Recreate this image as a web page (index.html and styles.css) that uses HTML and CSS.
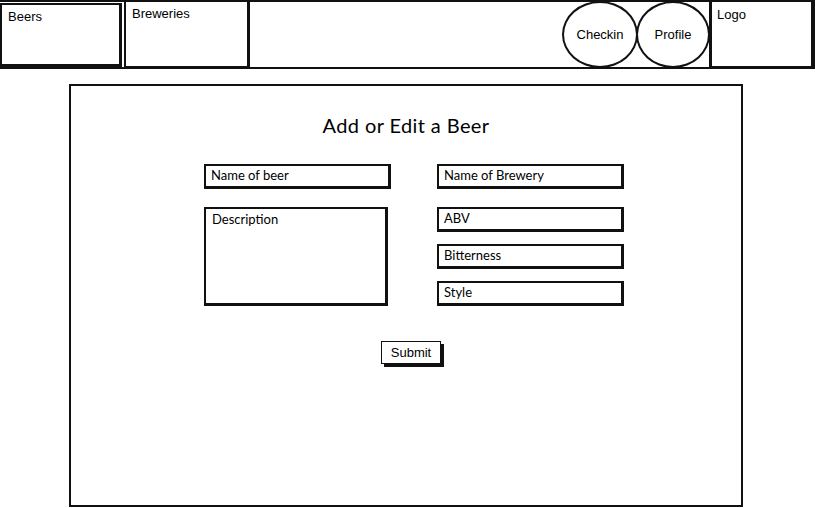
FILE: index.html
```html
<!DOCTYPE html>
<html lang="en">
<head>
    <meta charset="UTF-8">
    <title>Add or Edit a Beer</title>
    <meta name="viewport" content="width=device-width, initial-scale=1.0">
    <link rel="stylesheet" href="styles.css">
</head>
<body>

<div class="topbar">
    <div class="tab tab-beers">Beers</div>
    <div class="tab tab-breweries">Breweries</div>
    <div class="spacer"></div>
    <div class="circle">Checkin</div>
    <div class="circle">Profile</div>
    <div class="tab tab-logo">Logo</div>
</div>

<div class="panel">
    <h2>Add or Edit a Beer</h2>
    <form class="beer-form">
        <div class="col">
            <div class="field">Name of beer</div>
            <div class="field field-area">Description</div>
        </div>
        <div class="col">
            <div class="field">Name of Brewery</div>
            <div class="field field-small">ABV</div>
            <div class="field field-small">Bitterness</div>
            <div class="field field-small">Style</div>
        </div>
    </form>
    <div class="submit-row">
        <button type="button" class="submit">Submit</button>
    </div>
</div>

</body>
</html>
```

FILE: styles.css
```css
* {
    box-sizing: border-box;
}

body {
    margin: 0;
    background: #fff;
    color: #000;
    font-family: 'Liberation Sans', Arial, sans-serif;
    width: 815px;
    height: 508px;
    overflow: hidden;
}

/* top navigation */
.topbar {
    display: flex;
    align-items: stretch;
    height: 69px;
    border-top: 2px solid #111;
    border-bottom: 2px solid #111;
    border-right: 2px solid #111;
}

.tab {
    border: 2px solid #111;
    font-size: 13px;
    padding: 5px 6px;
}

.tab-beers {
    width: 122px;
    margin: 1px 0 0 0;
    padding-top: 4px;
    border-width: 2px 3px 3px 2px;
}

.tab-breweries {
    width: 126px;
    margin: -2px 0 -1px 2px;
    padding-top: 4px;
    border-width: 2px 3px 2px 2px;
}

.tab-logo {
    width: 104px;
    margin: -2px 0 -1px 0;
    padding-top: 5px;
    padding-left: 5px;
    border-width: 2px 2px 2px 3px;
}

.spacer {
    flex: 1;
}

.circle {
    width: 76px;
    margin: -1px -2px -1px 0;
    border: 2px solid #111;
    border-radius: 50%;
    display: flex;
    align-items: center;
    justify-content: center;
    font-size: 13px;
}

.circle + .circle {
    margin-right: -1px;
    width: 74px;
}

/* main panel */
.panel {
    width: 674px;
    height: 423px;
    margin: 15px 0 0 69px;
    border: 2px solid #111;
    font-family: Lato, 'Open Sans', sans-serif;
}

.panel h2 {
    margin: 27px 0 0 0;
    text-align: center;
    font-weight: normal;
    font-size: 20px;
    letter-spacing: 0.4px;
    height: 26px;
}

.beer-form {
    display: flex;
    gap: 46px;
    margin: 25px 0 0 133px;
}

.col {
    display: flex;
    flex-direction: column;
    gap: 12px;
}

.field {
    width: 187px;
    height: 25px;
    border: 2px solid #111;
    border-width: 2px 3px 3px 2px;
    padding: 1px 0 0 5px;
    font-size: 13px;
}

.field-area {
    width: 184px;
    height: 99px;
    margin-top: 6px;
    padding-top: 2px;
    padding-left: 6px;
}

.col .field-small:nth-child(2) {
    margin-top: 6px;
}

.submit-row {
    display: flex;
    justify-content: center;
    margin: 35px 0 0 10px;
}

.submit {
    font-family: 'Liberation Sans', Arial, sans-serif;
    font-size: 13px;
    color: #000;
    background: #fff;
    border: 1px solid #111;
    box-shadow: 3px 3px 0 #111;
    padding: 4px 9px 3px 9px;
    height: 23px;
    line-height: 14px;
}
```
